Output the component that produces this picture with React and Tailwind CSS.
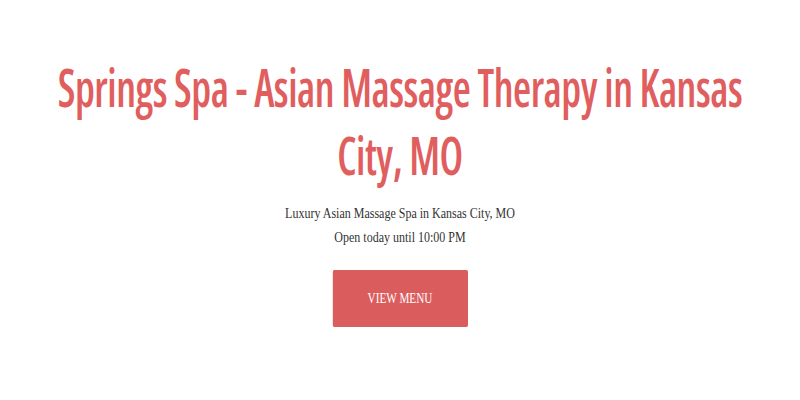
import React from 'react';

// The shot is squeezed to 80% horizontally, so the page is laid out at 1000px and scaled.
const App = () => {
  return (
    <div className="min-h-screen w-full bg-white overflow-hidden">
      <div className="w-[1000px] origin-top-left scale-x-[0.8] flex flex-col items-center pt-[53px]">
        <h1 className="w-[920px] text-center text-[52px] leading-[68px] font-semibold tracking-[-0.6px] text-[#e05e5e] font-['Open_Sans',sans-serif] [font-stretch:75%]">
          Springs Spa - Asian Massage Therapy in Kansas City, MO
        </h1>
        <div className="mt-[12px] text-center text-[15px] leading-[24px] text-[#333] font-['Liberation_Serif',serif]">
          <p>Luxury Asian Massage Spa in Kansas City, MO</p>
          <p>Open today until 10:00 PM</p>
        </div>
        <button className="mt-[21px] w-[169px] h-[57px] bg-[#db5c5c] text-white text-[14px] rounded-[2px] font-['Liberation_Serif',serif]">
          VIEW MENU
        </button>
      </div>
    </div>
  );
};

export default App;
